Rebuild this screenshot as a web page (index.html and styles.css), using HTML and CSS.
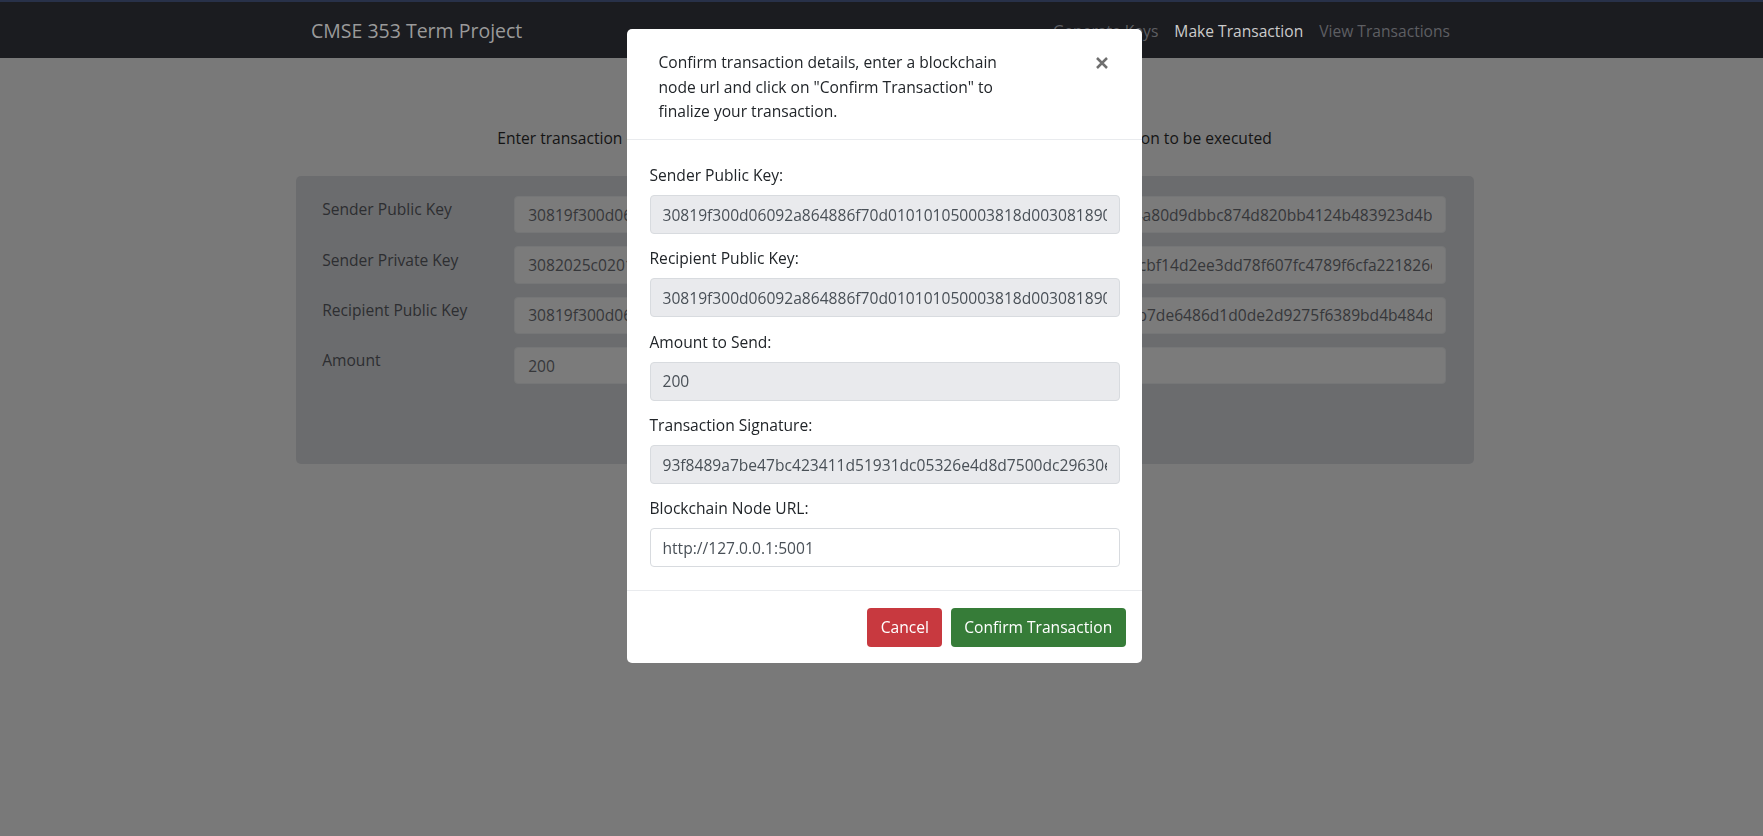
FILE: index.html
```html
<!DOCTYPE html>
<html lang="en">
<head>
<meta charset="utf-8">
<title>CMSE 353 Term Project</title>
<link rel="stylesheet" href="styles.css">
</head>
<body>
<nav class="navbar">
  <div class="container navbar-inner">
    <a class="brand" href="#">CMSE 353 Term Project</a>
    <ul class="nav">
      <li><a class="nav-link" href="#">Generate Keys</a></li>
      <li><a class="nav-link active" href="#">Make Transaction</a></li>
      <li><a class="nav-link" href="#">View Transactions</a></li>
    </ul>
  </div>
</nav>

<main class="container page">
  <p class="intro">Enter transaction details and click "Generate Transaction" button to create your transaction to be executed</p>
  <form class="panel">
    <label class="panel-label">Sender Public Key</label>
    <input class="panel-input" type="text" value="30819f300d06092a864886f70d010101050003818d0030818902818100c7f3e2b91d54a80d9dbbc874d820bb4124b483923d4b6f0e91c2a37d58b4e6f2019ca7d3b58e40f1c92a6b7d3e05f8a14c7b29d6e3f10203010001">
    <label class="panel-label">Sender Private Key</label>
    <input class="panel-input" type="text" value="3082025c02010002818100c7f3e2b91d54a80d9dbbc874d820bb4124b483923d4b6f0cbf14d2ee3dd78f607fc4789f6cfa221826e4b9a07c5d13f82e6a9b04d7c1f3e58a">
    <label class="panel-label">Recipient Public Key</label>
    <input class="panel-input" type="text" value="30819f300d06092a864886f70d010101050003818d0030818902818100e19a4c3f072fb7de6486d1d0de2d9275f6389bd4b484d9c2e7f10a6b3d85e4f927c01b6a3e8d5f4c20203010001">
    <label class="panel-label">Amount</label>
    <input class="panel-input" type="text" value="200">
    <div class="panel-actions">
      <button type="button" class="btn btn-primary">Generate Transaction</button>
    </div>
  </form>
</main>

<div class="modal" role="dialog" aria-modal="true">
  <div class="modal-header">
    <div class="modal-title">Confirm transaction details, enter a blockchain node url and click on "Confirm Transaction" to finalize your transaction.</div>
    <button type="button" class="close" aria-label="Close">
      <svg class="close-icon" viewBox="0 0 12 12" width="12" height="12" aria-hidden="true">
        <path d="M1 1 L11 11 M11 1 L1 11"/>
      </svg>
    </button>
  </div>
  <div class="modal-body">
    <div class="form-group">
      <label>Sender Public Key:</label>
      <input class="form-control" type="text" readonly value="30819f300d06092a864886f70d010101050003818d0030818902818100c7f3e2b91d54a80d9dbbc874d820bb4124b483923d4b6f0e91c2a37d58b4e6f2019ca7d3b58e40f1c92a6b7d3e05f8a14c7b29d6e3f10203010001">
    </div>
    <div class="form-group">
      <label>Recipient Public Key:</label>
      <input class="form-control" type="text" readonly value="30819f300d06092a864886f70d010101050003818d0030818902818100e19a4c3f072fb7de6486d1d0de2d9275f6389bd4b484d9c2e7f10a6b3d85e4f927c01b6a3e8d5f4c20203010001">
    </div>
    <div class="form-group">
      <label>Amount to Send:</label>
      <input class="form-control" type="text" readonly value="200">
    </div>
    <div class="form-group">
      <label>Transaction Signature:</label>
      <input class="form-control" type="text" readonly value="93f8489a7be47bc423411d51931dc05326e4d8d7500dc29630e2b7f41c9a6d08e35f1b7c2d94a0e6f8b3c51d7e29a4f06b8c3e1d5a7f92b04c6e8">
    </div>
    <div class="form-group">
      <label>Blockchain Node URL:</label>
      <input class="form-control editable" type="text" value="http://127.0.0.1:5001">
    </div>
  </div>
  <div class="modal-footer">
    <button type="button" class="btn btn-danger">Cancel</button>
    <button type="button" class="btn btn-success">Confirm Transaction</button>
  </div>
</div>
</body>
</html>
```

FILE: styles.css
```css
* {
  box-sizing: border-box;
}

html,
body {
  margin: 0;
  height: 100%;
}

body {
  font-family: "Open Sans", "Noto Sans", "DejaVu Sans", sans-serif;
  font-size: 15.6px;
  line-height: 1.5;
  color: #151515;
  background: #797979;
  overflow: hidden;
}

.container {
  width: 1178px;
  margin-left: calc(50% - 586px);
}

/* ---------- navbar ---------- */
.navbar {
  height: 58px;
  background: #1b1c20;
  border-top: 2px solid #283149;
}

.navbar-inner {
  height: 100%;
  display: flex;
  align-items: center;
  justify-content: space-between;
  padding: 2px 15.5px 0;
}

.brand {
  font-size: 19.5px;
  line-height: 1.5;
  color: #9a9a9a;
  text-decoration: none;
}

.nav {
  display: flex;
  list-style: none;
  margin: 0;
  padding: 1px 0 0;
}

.nav-link {
  display: block;
  padding: 8px;
  color: #5e5f63;
  text-decoration: none;
}

.nav-link.active {
  color: #cbcbcb;
}

/* ---------- page ---------- */
.page {
  padding-top: 68.6px;
}

.intro {
  margin: 0 0 25.7px;
  text-align: center;
  line-height: 23.4px;
  color: #141414;
}

.panel {
  display: grid;
  grid-template-columns: 192.3px 1fr;
  row-gap: 13px;
  padding: 20.3px 28px 21px 26.7px;
  background: #6b6c6e;
  border-radius: 5px;
}

.panel-label {
  padding-top: 2.5px;
  line-height: 23.4px;
  color: #2d2e31;
}

.panel-input {
  height: 37.3px;
  width: 100%;
  padding: 0 12.7px;
  border: 1px solid #757677;
  border-radius: 4px;
  background: #7b7b7b;
  color: #36373a;
  font: inherit;
}

.panel-actions {
  grid-column: 1 / -1;
  display: flex;
  justify-content: center;
  margin-top: 7px;
}

/* ---------- buttons ---------- */
.btn {
  height: 39px;
  padding: 0 12.3px;
  border: 1px solid transparent;
  border-radius: 4px;
  font: inherit;
  line-height: 1.5;
  color: #fff;
  cursor: pointer;
}

.btn-primary {
  background: #1a4d84;
}

.btn-danger {
  background: #c8393f;
}

.btn-success {
  background: #367c38;
}

/* ---------- modal ---------- */
.modal {
  position: fixed;
  top: 29px;
  left: calc(50% - 254.5px);
  width: 515px;
  background: #fff;
  border-radius: 5px;
  color: #212529;
}

.modal-header {
  display: flex;
  align-items: flex-start;
  padding: 21.2px 34px 14.6px 31.5px;
  border-bottom: 1px solid #e9ebee;
}

.modal-title {
  width: 352px;
  line-height: 24.6px;
}

.close {
  display: block;
  margin: 6.8px 0 0 auto;
  padding: 0;
  border: 0;
  background: none;
  width: 12px;
  height: 12px;
  cursor: pointer;
}

.close-icon {
  display: block;
  fill: none;
  stroke: #6f6f6f;
  stroke-width: 2.5;
}

.modal-body {
  padding: 24.6px 22.5px 22.6px;
}

.form-group + .form-group {
  margin-top: 13.3px;
}

.form-group label {
  display: block;
  line-height: 23.4px;
  margin-bottom: 7.6px;
}

.form-control {
  display: block;
  width: 100%;
  height: 39px;
  padding: 0 12px;
  border: 1px solid #d8dbdf;
  border-radius: 4px;
  background: #e9eaed;
  color: #495057;
  font: inherit;
}

.form-control.editable {
  background: #fff;
}

.modal-footer {
  display: flex;
  justify-content: flex-end;
  gap: 8.6px;
  padding: 17px 16.5px 16.5px;
  border-top: 1px solid #e9ebee;
}
```
